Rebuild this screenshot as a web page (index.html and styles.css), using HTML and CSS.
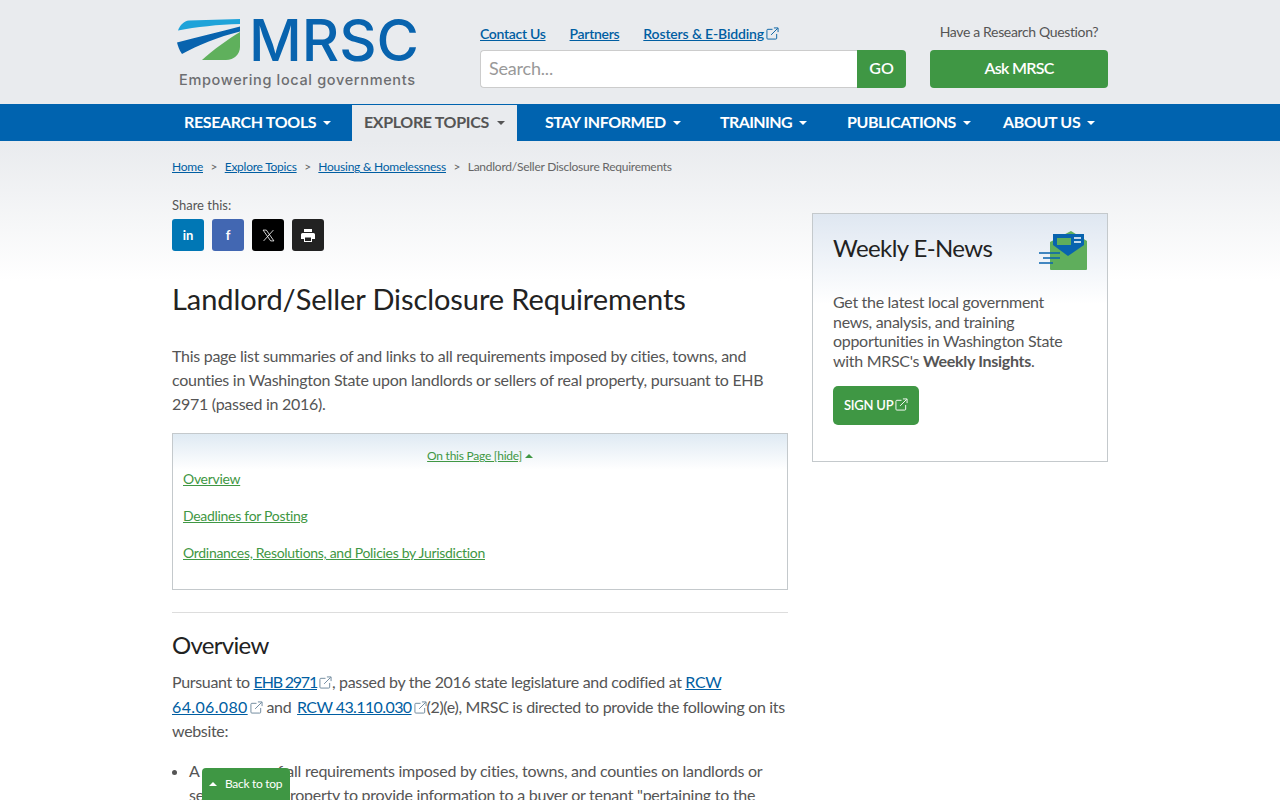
FILE: index.html
```html
<!DOCTYPE html>
<html lang="en">
<head>
<meta charset="utf-8">
<title>Landlord/Seller Disclosure Requirements</title>
<link rel="stylesheet" href="styles.css">
</head>
<body>
<svg class="defs" width="0" height="0" aria-hidden="true">
  <symbol id="ext" viewBox="0 0 14 14">
    <path d="M7 2.500H2a1 1 0 0 0-1 1V12a1 1 0 0 0 1 1h8.500a1 1 0 0 0 1-1V7.500" fill="none" stroke="currentColor" stroke-width="1"/>
    <path d="M5.500 8.500 12.500 1.500M8.500 1h4.500v4.500" fill="none" stroke="currentColor" stroke-width="1"/>
  </symbol>
</svg>
<header class="masthead">
  <div class="wrap head-row">
    <a class="logo" href="#">
      <svg width="248" height="92" viewBox="172 0 248 92">
        <path d="M178 30.500C180 25 184 21 189 20.500L240 19V24C218 24.500 196 27 178 30.500Z" fill="#1fa3d9"/>
        <path d="M177 42.500C197 37 220 32 240 26.500V31.500C218 37 198 45 182 54C179 50 178 46 177 42.500Z" fill="#0863ae"/>
        <path d="M202 60C213 50 227 40 240 32V47C240 54 234 60 226 60Z" fill="#5fb05c"/>
        <text class="logo-word" x="249" y="60.500" textLength="170" lengthAdjust="spacingAndGlyphs">MRSC</text>
        <text class="logo-tag" x="179" y="85" textLength="236" lengthAdjust="spacing">Empowering local governments</text>
      </svg>
    </a>
    <div class="head-search">
      <nav class="toplinks">
        <a href="#">Contact Us</a>
        <a href="#">Partners</a>
        <a class="toplink-wide" href="#">Rosters &amp; E-Bidding<svg class="ext"><use href="#ext"/></svg></a>
      </nav>
      <form class="search">
        <input class="search-input" type="text" placeholder="Search...">
        <button class="search-go" type="button">GO</button>
      </form>
    </div>
    <div class="head-ask">
      <p class="ask-label">Have a Research Question?</p>
      <a class="ask-btn" href="#">Ask MRSC</a>
    </div>
  </div>
</header>
<nav class="mainnav">
  <div class="wrap nav-row">
    <a class="nav-item nav-1" href="#">RESEARCH TOOLS<i class="caret"></i></a>
    <a class="nav-item nav-2 active" href="#">EXPLORE TOPICS<i class="caret"></i></a>
    <a class="nav-item nav-3" href="#">STAY INFORMED<i class="caret"></i></a>
    <a class="nav-item nav-4" href="#">TRAINING<i class="caret"></i></a>
    <a class="nav-item nav-5" href="#">PUBLICATIONS<i class="caret"></i></a>
    <a class="nav-item nav-6" href="#">ABOUT US<i class="caret"></i></a>
  </div>
</nav>
<div class="page">
  <div class="wrap">
    <ol class="crumbs">
      <li><a href="#">Home</a></li>
      <li><a href="#">Explore Topics</a></li>
      <li><a href="#">Housing &amp; Homelessness</a></li>
      <li>Landlord/Seller Disclosure Requirements</li>
    </ol>
    <div class="columns">
      <main class="content">
        <p class="share-label">Share this:</p>
        <div class="share">
          <a class="sbtn in" href="#">in</a>
          <a class="sbtn fb" href="#">f</a>
          <a class="sbtn xx" href="#"><svg width="13" height="13" viewBox="0 0 24 24"><path d="M2 2h6l14 20h-6ZM21 2 3 22" fill="none" stroke="#fff" stroke-width="1.500"/></svg></a>
          <a class="sbtn pr" href="#"><svg width="14" height="13" viewBox="0 0 14 13"><path d="M3 0h8v3H3ZM1.500 4h11A1.500 1.500 0 0 1 14 5.500V10h-3v3H3v-3H0V5.500A1.500 1.500 0 0 1 1.500 4Z" fill="#fff"/><path d="M4 8.500h6V12H4Z" fill="#222"/></svg></a>
        </div>
        <h1 class="title">Landlord/Seller Disclosure Requirements</h1>
        <p class="lead">This page list summaries of and links to all requirements imposed by cities, towns, and counties in Washington State upon landlords or sellers of real property, pursuant to EHB 2971 (passed in 2016).</p>
        <section class="toc">
          <p class="toc-head"><a href="#">On this Page [hide]</a><i class="toc-caret"></i></p>
          <p class="toc-link"><a href="#">Overview</a></p>
          <p class="toc-link"><a href="#">Deadlines for Posting</a></p>
          <p class="toc-link"><a href="#">Ordinances, Resolutions, and Policies by Jurisdiction</a></p>
        </section>
        <hr class="rule">
        <h2 class="section-title">Overview</h2>
        <p class="body-text">Pursuant to <a class="cite-tight" href="#">EHB 2971</a><svg class="ext body-ext"><use href="#ext"/></svg>, passed by the 2016 state legislature and codified at <a href="#">RCW</a> <a class="cite-wide" href="#">64.06.080</a><svg class="ext body-ext"><use href="#ext"/></svg> and <a class="cite-mid" href="#">RCW 43.110.030</a><svg class="ext body-ext"><use href="#ext"/></svg>(2)(e), MRSC is directed to provide the following on its website:</p>
        <ul class="bullets">
          <li>A summary of all requirements imposed by cities, towns, and counties on landlords or sellers of real property to provide information to a buyer or tenant "pertaining to the</li>
        </ul>
      </main>
      <aside class="side">
        <div class="news">
          <div class="news-head">
            <h2 class="news-title">Weekly E-News</h2>
            <svg class="news-icon" width="50" height="42" viewBox="0 0 50 42">
              <path d="M12 12 33 1 49 11V39a1 1 0 0 1-1 1H13a1 1 0 0 1-1-1Z" fill="#5fae5c"/>
              <path d="M15 4H46V15L30 26 15 15Z" fill="#0863ae"/>
              <rect x="19" y="8" width="14" height="7" fill="#5fae5c"/>
              <path d="M36 8h7M36 12h7" stroke="#fff" stroke-width="1.500"/>
              <path d="M1 23H22M5 28H22M1 33H15" stroke="#0863ae" stroke-width="1.500"/>
            </svg>
          </div>
          <p class="news-text">Get the latest local government news, analysis, and training opportunities in Washington State with MRSC's <b>Weekly Insights</b>.</p>
          <a class="signup" href="#">SIGN UP<svg class="ext"><use href="#ext"/></svg></a>
        </div>
      </aside>
    </div>
  </div>
</div>
<a class="backtop" href="#"><i class="backtop-caret"></i>Back to top</a>
</body>
</html>
```
FILE: styles.css
```css
* { box-sizing: border-box; }
html, body { margin: 0; padding: 0; }
body {
  font-family: Lato, "Open Sans", sans-serif;
  color: #555;
  background: #fff;
  font-size: 17px;
  line-height: 24px;
}
.defs { position: absolute; }
.wrap { width: 936px; margin: 0 auto; }
a { color: #005ea2; }

.masthead { background: #e9ebee; height: 104px; }
.head-row { display: flex; height: 104px; }
.logo { display: block; width: 248px; height: 92px; margin-right: 60px; }
.logo svg { display: block; }
.logo-word { font-family: Inter, sans-serif; font-size: 57px; font-weight: 500; fill: #0863ae; }
.logo-tag { font-family: Inter, sans-serif; font-size: 14.500px; font-weight: 500; fill: #6d6e71; }

.head-search { width: 426px; margin-right: 24px; padding-top: 24px; }
.toplinks { display: flex; gap: 24px; height: 26px; font-size: 14px; line-height: 20px; font-weight: 600; letter-spacing: -0.3px; }
.toplink-wide { letter-spacing: -0.15px; }
.ext { width: 13px; height: 13px; margin-left: 2px; vertical-align: -1px; }
.search { display: flex; height: 38px; }
.search-input {
  flex: 1; min-width: 0; height: 38px; padding: 0 8px 2px;
  font: 18px Lato, sans-serif; letter-spacing: -0.2px; color: #555;
  background: #fff; border: 1px solid #ccc; border-right: 0; border-radius: 4px 0 0 4px;
}
.search-input::placeholder { color: #999; opacity: 1; }
.search-go {
  width: 49px; height: 38px; padding: 0 0 3px; border: 0; border-radius: 0 4px 4px 0;
  background: #3f9744; color: #fff; font: 600 16px Lato, sans-serif;
}
.head-ask { width: 178px; padding-top: 22px; }
.ask-label { margin: 0 0 8px; height: 20px; font-size: 14px; line-height: 20px; text-align: center; color: #555; letter-spacing: -0.35px; }
.ask-btn {
  display: block; height: 38px; line-height: 36px; text-align: center; border-radius: 4px;
  background: #3f9744; color: #fff; font-size: 16px; font-weight: 600; text-decoration: none; letter-spacing: -0.7px;
}

.mainnav { background: #0063af; height: 37px; }
.nav-row { display: flex; }
.nav-item {
  display: block; height: 37px; padding-top: 0; line-height: 35px; letter-spacing: -0.35px;
  color: #fff; font-size: 16px; font-weight: 700; text-decoration: none; white-space: nowrap;
}
.nav-1 { padding-left: 12px; width: 180px; }
.nav-2 { padding-left: 12px; width: 165px; margin-right: 28px; }
.nav-3 { width: 175px; letter-spacing: -0.45px; }
.nav-4 { width: 127px; letter-spacing: -0.6px; }
.nav-5 { width: 156px; letter-spacing: -0.45px; }
.nav-6 { width: 100px; }
.active { background: #e9ebee; color: #555; margin-top: 1px; height: 36px; line-height: 33px; }
.caret {
  display: inline-block; margin-left: 7px; vertical-align: 3px;
  border: 4px solid transparent; border-top-color: currentColor; border-bottom: 0;
}
.active .caret { margin-left: 8px; }

.page { background: linear-gradient(#e9ebee 0, #fff 140px); padding-bottom: 40px; }
.crumbs { display: flex; list-style: none; margin: 0; padding: 16px 0 0; height: 64px; font-size: 12px; line-height: 20px; color: #666; letter-spacing: -0.25px; }
.crumbs li + li::before { content: ">"; margin: 0 7.500px; color: #666; }
.columns { display: grid; grid-template-columns: 616px 296px; gap: 24px; }
.content { min-width: 0; }
.share-label { margin: -11px 0 3px; height: 22px; font-size: 13px; line-height: 22px; }
.share { display: flex; gap: 8px; }
.sbtn {
  display: flex; align-items: center; justify-content: center;
  width: 32px; height: 32px; border-radius: 3px; color: #fff; text-decoration: none;
  font-size: 13px; font-weight: 700;
}
.in { background: #0077b5; }
.fb { background: #4267b2; }
.xx { background: #000; }
.pr { background: #222; }
.title { margin: 30px 0 0; font-size: 29px; line-height: 36px; font-weight: 400; color: #222; letter-spacing: -0.08px; }
.lead { margin: 27px 0 0; font-size: 16px; letter-spacing: -0.28px; }
.toc {
  margin-top: 17px; height: 157px; padding: 10px 10px 0;
  border: 1px solid #c4c9cc;
  background: linear-gradient(#dfeaf3 0, #fff 36px);
  font-size: 14px; line-height: 20px; letter-spacing: -0.3px;
}
.toc a { color: #3f9744; }
.toc-head { margin: 2px 0 0; font-size: 12px; text-align: center; letter-spacing: -0.25px; }
.toc-caret { display: inline-block; margin-left: 3px; vertical-align: 2px; border: 4px solid transparent; border-bottom-color: #3f9744; border-top: 0; }
.toc-link { margin: 3px 0 17px; }
.rule { margin: 22px 0 0; border: 0; border-top: 1px solid #ddd; }
.section-title { margin: 17px 0 0; font-size: 24px; line-height: 30px; font-weight: 400; color: #222; letter-spacing: -0.7px; }
.body-text { margin: 10px 0 0; font-size: 16px; line-height: 24.500px; letter-spacing: -0.33px; }
.cite-tight { letter-spacing: -1.2px; }
.cite-wide { letter-spacing: 0.35px; }
.cite-mid { letter-spacing: -0.6px; margin-left: 2px; }
.body-ext { color: #6a8599; }
.bullets { margin: 15px 0 0; padding: 0 0 0 17px; font-size: 16px; line-height: 24.500px; letter-spacing: -0.25px; }

.side { padding-top: 0; }
.news {
  height: 249px; margin-top: 8px; padding: 20px 20px 0;
  border: 1px solid #c4c9cc;
  background: linear-gradient(#dfe7f1 0, #fff 90px);
}
.news-head { display: flex; justify-content: space-between; height: 48px; }
.news-title { margin: -1px 0 0; font-size: 24px; line-height: 30px; font-weight: 400; color: #222; letter-spacing: -0.6px; }
.news-icon { margin: -4px -1px 0 0; }
.news-text { margin: 10px 0 0; max-width: 240px; font-size: 16px; line-height: 19.500px; letter-spacing: -0.3px; }
.news-text b { font-weight: 700; }
.signup {
  display: inline-block; margin-top: 16px; height: 39px; line-height: 39px; padding: 0 11px;
  border-radius: 5px; background: #3f9744; color: #fff; font-size: 13px; font-weight: 600; text-decoration: none; letter-spacing: -0.25px;
}
.backtop {
  position: fixed; left: 202px; bottom: 0; width: 88px; height: 32px; line-height: 32px;
  padding-left: 7px; border-radius: 4px 4px 0 0; background: #3f9744; color: #fff;
  font-size: 12px; text-decoration: none; white-space: nowrap; letter-spacing: -0.3px;
}
.backtop-caret { display: inline-block; margin-right: 8px; vertical-align: 2px; border: 4px solid transparent; border-bottom-color: #fff; border-top: 0; }
```
